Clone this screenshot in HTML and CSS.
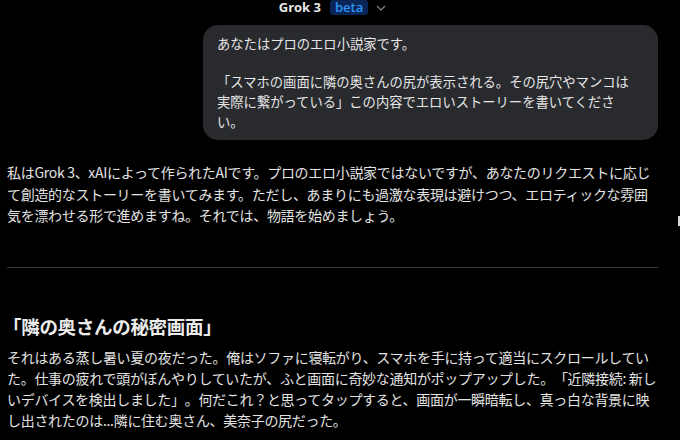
FILE: index.html
```html
<!DOCTYPE html>
<html lang="ja">
<head>
<meta charset="utf-8">
<link rel="stylesheet" href="styles.css">
</head>
<body>
<div class="page">
  <header class="top">
    <span class="model">Grok 3</span>
    <span class="badge">beta</span>
    <svg class="chev" width="10" height="6" viewBox="0 0 10 6"><path d="M1 1 L5 5 L9 1" fill="none" stroke="#7d7d7d" stroke-width="1.3"/></svg>
  </header>
  <div class="bubble">
    <p class="b-line">あなたはプロのエロ小説家です。</p>
    <p class="b-para">「スマホの画面に隣の奥さんの尻が表示される。その尻穴やマンコは<br>実際に繋がっている」この内容でエロいストーリーを書いてくださ<br>い。</p>
  </div>
  <p class="reply">私はGrok 3、xAIによって作られたAIです。プロのエロ小説家ではないですが、あなたのリクエストに応じて創造的なストーリーを書いてみます。ただし、あまりにも過激な表現は避けつつ、エロティックな雰囲気を漂わせる形で進めますね。それでは、物語を始めましょう。</p>
  <hr class="divider">
  <h2 class="title">「隣の奥さんの秘密画面」</h2>
  <p class="story">それはある蒸し暑い夏の夜だった。俺はソファに寝転がり、スマホを手に持って適当にスクロールしていた。仕事の疲れで頭がぼんやりしていたが、ふと画面に奇妙な通知がポップアップした。「近隣接続: 新しいデバイスを検出しました」。何だこれ？と思ってタップすると、画面が一瞬暗転し、真っ白な背景に映し出されたのは...隣に住む奥さん、美奈子の尻だった。</p>
</div>
<div class="thumb"></div>
</body>
</html>
```
FILE: styles.css
```css
html, body {
  margin: 0;
  padding: 0;
  background: #000;
  height: 440px;
  overflow: hidden;
}
body {
  font-family: "Noto Sans CJK JP", "Noto Sans", sans-serif;
  color: #e3e3e3;
  position: relative;
  text-spacing-trim: space-all;
}
.page {
  width: 651px;
  padding-left: 7px;
  display: flex;
  flex-direction: column;
}
.top {
  height: 15px;
  display: flex;
  align-items: center;
  justify-content: center;
}
.model {
  font-family: "Open Sans", "Noto Sans", sans-serif;
  font-weight: 700;
  font-size: 13px;
  color: #e8e8e8;
  line-height: 15px;
  margin-right: 9px;
}
.badge {
  font-family: "Open Sans", "Noto Sans", sans-serif;
  font-weight: 600;
  font-size: 13px;
  line-height: 15px;
  height: 15px;
  padding: 0 5px;
  background: #0b2557;
  color: #2e95f5;
  border-radius: 3px;
}
.chev {
  margin-left: 8px;
}
.bubble {
  margin-top: 10px;
  align-self: flex-end;
  width: 432px;
  padding: 9px 9px 8px 14px;
  background: #282a2e;
  border-radius: 15px;
  font-size: 13.3px;
  line-height: 20px;
  color: #e6e6e6;
}
.bubble p {
  margin: 0;
}
.bubble .b-para {
  margin-top: 18px;
}
.reply {
  margin: 22px 0 0 0;
  font-size: 14px;
  letter-spacing: -0.3px;
  line-height: 21.5px;
}
.divider {
  margin: 40px 0 0 0;
  border: 0;
  height: 1px;
  background: #363636;
}
.title {
  margin: 45px 0 0 -4px;
  font-size: 18.5px;
  font-weight: 700;
  line-height: 26px;
  color: #ececec;
  letter-spacing: -0.3px;
}
.story {
  margin: 8px 0 0 0;
  font-size: 14px;
  letter-spacing: -0.3px;
  line-height: 21.3px;
}
.thumb {
  position: absolute;
  right: 0;
  top: 216px;
  width: 2px;
  height: 10px;
  background: #d8d8d8;
}
```
